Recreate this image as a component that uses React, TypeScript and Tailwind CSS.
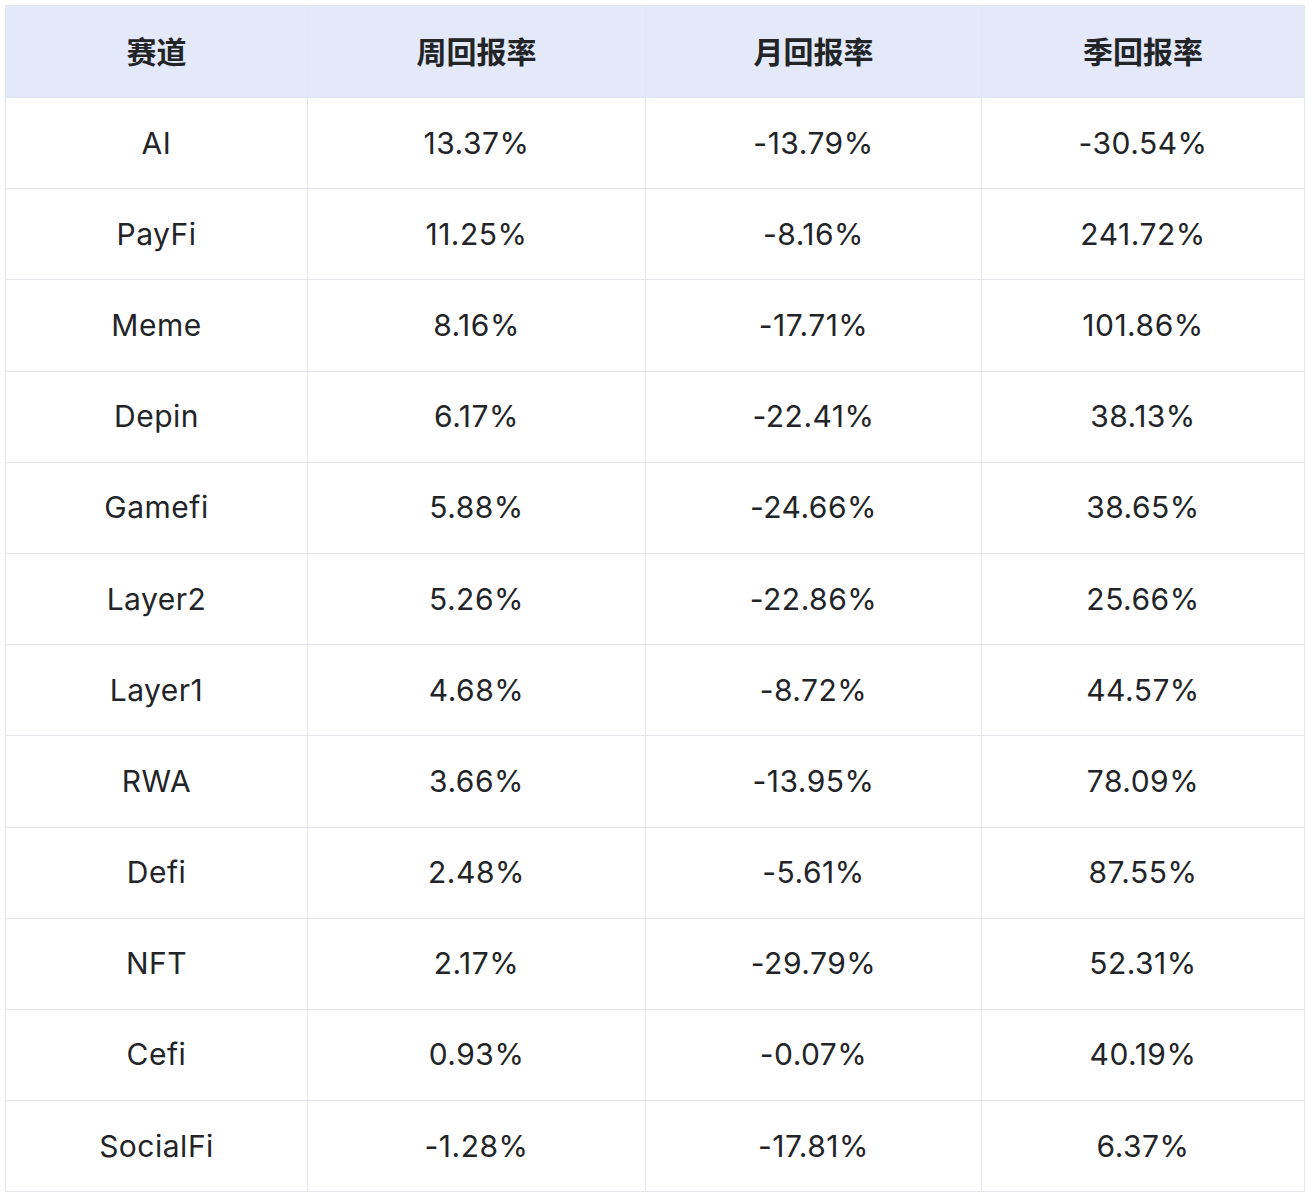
const rows = [
  ["AI", "13.37%", "-13.79%", "-30.54%"],
  ["PayFi", "11.25%", "-8.16%", "241.72%"],
  ["Meme", "8.16%", "-17.71%", "101.86%"],
  ["Depin", "6.17%", "-22.41%", "38.13%"],
  ["Gamefi", "5.88%", "-24.66%", "38.65%"],
  ["Layer2", "5.26%", "-22.86%", "25.66%"],
  ["Layer1", "4.68%", "-8.72%", "44.57%"],
  ["RWA", "3.66%", "-13.95%", "78.09%"],
  ["Defi", "2.48%", "-5.61%", "87.55%"],
  ["NFT", "2.17%", "-29.79%", "52.31%"],
  ["Cefi", "0.93%", "-0.07%", "40.19%"],
  ["SocialFi", "-1.28%", "-17.81%", "6.37%"],
]

const headers = ["赛道", "周回报率", "月回报率", "季回报率"]

export default function App() {
  return (
    <div className="w-[1312px] h-[1198px] bg-white pt-[5px] pl-[5px] font-['Inter','Noto_Sans_CJK_SC',sans-serif] text-[#222428]">
      <table className="w-[1299px] border-collapse table-fixed">
        <colgroup>
          <col className="w-[302px]" />
          <col className="w-[338px]" />
          <col className="w-[336px]" />
          <col className="w-[323px]" />
        </colgroup>
        <thead>
          <tr className="h-[92px] bg-[#e3e9f8]">
            {headers.map((h) => (
              <th key={h} className="border border-[#e3e6ec] text-[30px] font-bold text-center pt-[2px]">
                {h}
              </th>
            ))}
          </tr>
        </thead>
        <tbody>
          {rows.map((r) => (
            <tr key={r[0]} className="h-[91.2px]">
              {r.map((c, i) => (
                <td key={i} className="border border-[#e3e6ec] text-[30px] tracking-[0.5px] text-center">
                  {c}
                </td>
              ))}
            </tr>
          ))}
        </tbody>
      </table>
    </div>
  )
}
